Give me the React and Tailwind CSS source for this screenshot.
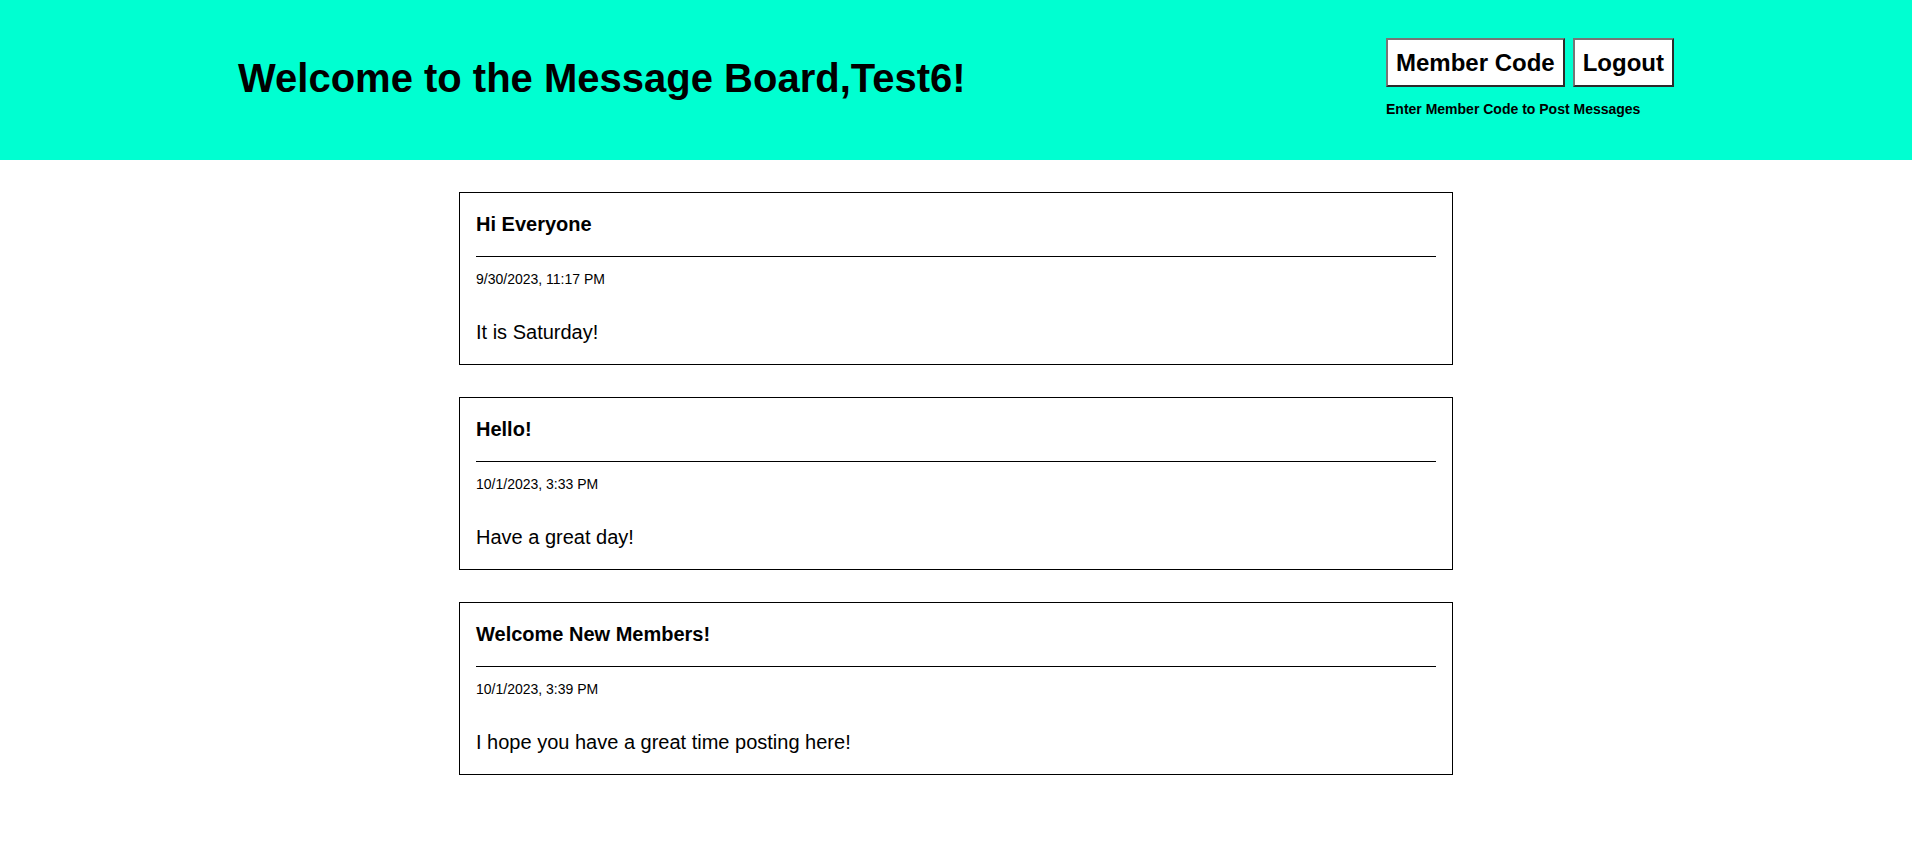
import React from 'react';

const messages = [
  { title: 'Hi Everyone', date: '9/30/2023, 11:17 PM', body: 'It is Saturday!' },
  { title: 'Hello!', date: '10/1/2023, 3:33 PM', body: 'Have a great day!' },
  { title: 'Welcome New Members!', date: '10/1/2023, 3:39 PM', body: 'I hope you have a great time posting here!' },
];

const HeaderButton = ({ children }) => (
  <button
    type="button"
    className="bg-white px-2 py-2 text-[24px] font-bold leading-[29px] text-black border-2 border-solid border-t-[#767676] border-l-[#767676] border-b-[#2b2b2b] border-r-[#2b2b2b]"
  >
    {children}
  </button>
);

const MessageCard = ({ title, date, body }) => (
  <div className="w-[994px] border border-black px-4">
    <h2 className="pt-[20px] text-[20px] font-bold leading-[23px]">{title}</h2>
    <hr className="mt-[20px] border-0 border-t border-black" />
    <p className="mt-[14px] text-[14px] leading-[16px]">{date}</p>
    <p className="mt-[34px] pb-[20px] text-[20px] leading-[23px]">{body}</p>
  </div>
);

export default function App() {
  return (
    <div className="min-h-screen bg-white text-black font-['Liberation_Sans',Arial,sans-serif]">
      <header className="h-[160px] bg-[#00ffd1] flex justify-between px-[238px]">
        <h1 className="mt-[55px] text-[40px] font-bold leading-[46px]">
          Welcome to the Message Board,Test6!
        </h1>
        <div className="pt-[38px]">
          <div className="flex gap-2">
            <HeaderButton>Member Code</HeaderButton>
            <HeaderButton>Logout</HeaderButton>
          </div>
          <p className="mt-[14px] text-[14px] font-bold leading-[16px]">
            Enter Member Code to Post Messages
          </p>
        </div>
      </header>

      <main className="flex flex-col items-center gap-[32px] pt-[32px] pb-10">
        {messages.map((m) => (
          <MessageCard key={m.title} {...m} />
        ))}
      </main>
    </div>
  );
}
